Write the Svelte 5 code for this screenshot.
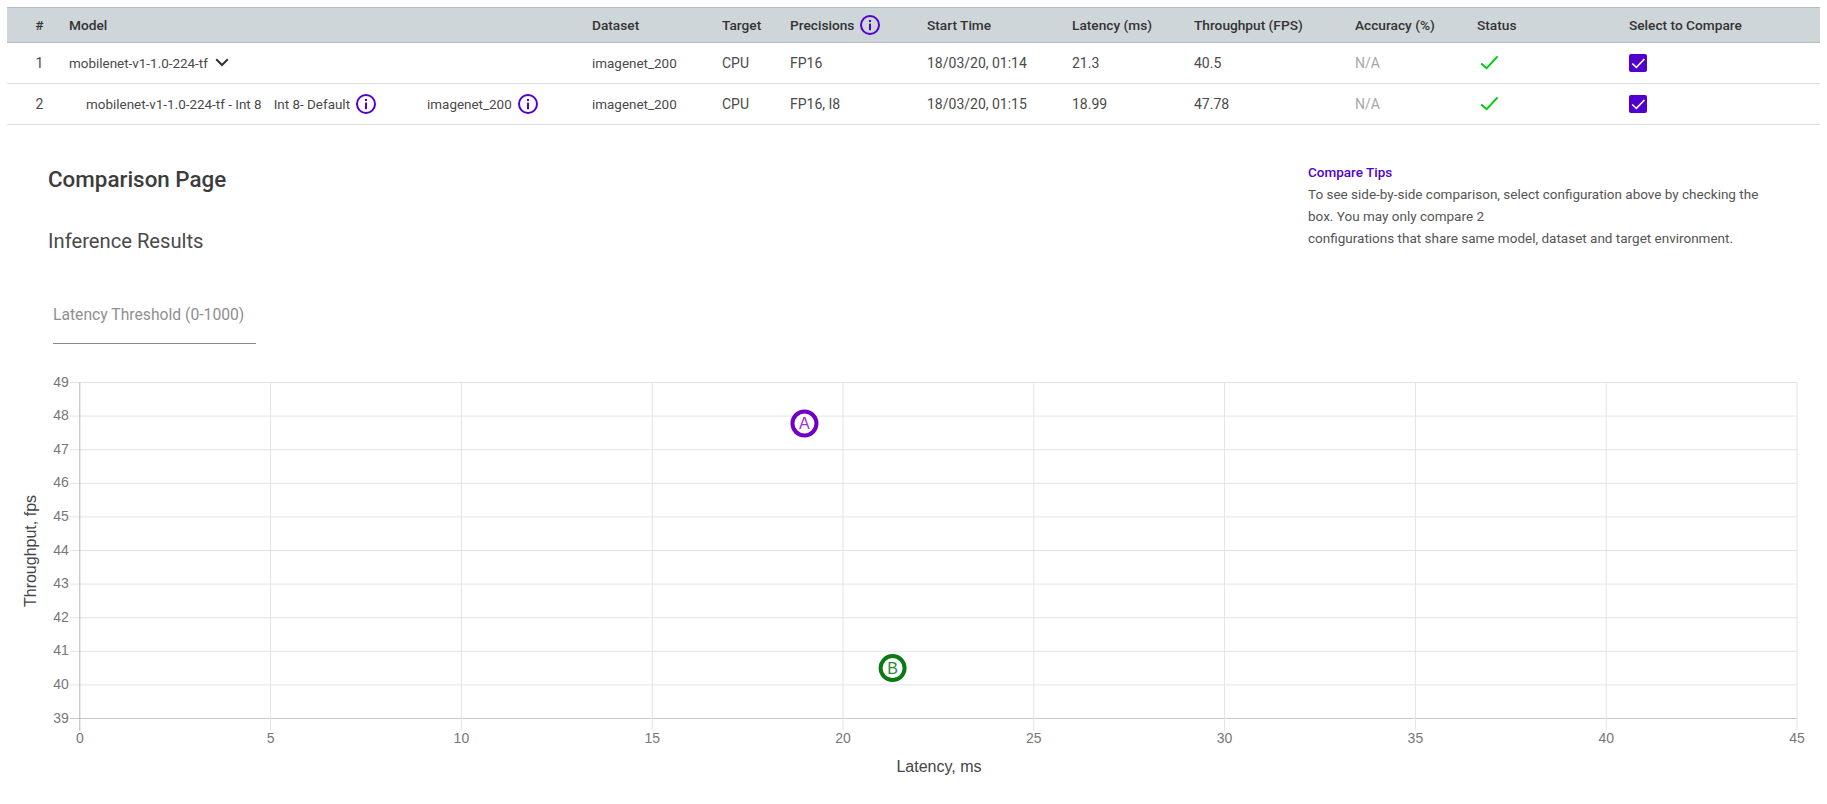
<script>
  const columns = [
    { label: '#', cls: 'num' },
    { label: 'Model' },
    { label: 'Dataset' },
    { label: 'Target' },
    { label: 'Precisions', info: true },
    { label: 'Start Time' },
    { label: 'Latency (ms)' },
    { label: 'Throughput (FPS)' },
    { label: 'Accuracy (%)' },
    { label: 'Status' },
    { label: 'Select to Compare' }
  ];

  const rows = [
    { id: 1, precisions: 'FP16', time: '18/03/20, 01:14', latency: '21.3', fps: '40.5' },
    { id: 2, precisions: 'FP16, I8', time: '18/03/20, 01:15', latency: '18.99', fps: '47.78', child: true }
  ];

  // chart scale, read off the reference
  const x0 = 79.8;
  const y0 = 718.5;
  const pxX = 38.16;
  const pxY = 33.6;
  const top = 344;
  const sx = (v) => x0 + v * pxX;
  const sy = (v) => y0 - v * pxY - top;

  const xTicks = [0, 5, 10, 15, 20, 25, 30, 35, 40, 45];
  const yTicks = [0, 1, 2, 3, 4, 5, 6, 7, 8, 9, 10];
</script>

{#snippet infoIcon()}
  <svg class="info" viewBox="0 0 20 20" width="20" height="20">
    <circle cx="10" cy="10" r="9" fill="none" stroke="#5200cf" stroke-width="2" />
    <rect x="9" y="5" width="2" height="2" fill="#5200cf" />
    <rect x="9" y="8.6" width="2" height="6.6" fill="#5200cf" />
  </svg>
{/snippet}

<div class="table">
  <div class="row head">
    {#each columns as col}
      <div class="cell {col.cls ?? ''}">
        {col.label}
        {#if col.info}{@render infoIcon()}{/if}
      </div>
    {/each}
  </div>
  {#each rows as row}
    <div class="row">
      <div class="cell num">{row.id}</div>
      {#if row.child}
        <div class="cell model child">
          <span class="name">mobilenet-v1-1.0-224-tf - Int 8</span>
          <span class="sub">Int 8- Default {@render infoIcon()}</span>
          <span class="sub set">imagenet_200 {@render infoIcon()}</span>
        </div>
      {:else}
        <div class="cell model">
          mobilenet-v1-1.0-224-tf
          <svg class="chev" viewBox="0 0 14 9" width="14" height="9">
            <path d="M1.2 1.2 L7 7 L12.8 1.2" fill="none" stroke="#333" stroke-width="2" />
          </svg>
        </div>
      {/if}
      <div class="cell model">imagenet_200</div>
      <div class="cell">CPU</div>
      <div class="cell">{row.precisions}</div>
      <div class="cell">{row.time}</div>
      <div class="cell">{row.latency}</div>
      <div class="cell">{row.fps}</div>
      <div class="cell na">N/A</div>
      <div class="cell">
        <svg class="ok" viewBox="0 0 20 16" width="20" height="16">
          <path d="M1.2 8.4 L6.6 13.2 L17.6 1.4" fill="none" stroke="#00cc11" stroke-width="2" />
        </svg>
      </div>
      <div class="cell">
        <span class="check">
          <svg viewBox="0 0 18 18" width="18" height="18">
            <path d="M3.2 9.5 L7.4 13.4 L15.4 5" fill="none" stroke="#fff" stroke-width="1.6" />
          </svg>
        </span>
      </div>
    </div>
  {/each}
</div>

<section class="summary">
  <div class="titles">
    <h1>Comparison Page</h1>
    <h2>Inference Results</h2>
  </div>
  <div class="tips">
    <h3>Compare Tips</h3>
    <p>To see side-by-side comparison, select configuration above by checking the box. You may only compare 2<br />configurations that share same model, dataset and target environment.</p>
  </div>
</section>

<div class="threshold">Latency Threshold (0-1000)</div>

<svg class="chart" width="1827" height="460" viewBox="0 0 1827 460">
  {#each yTicks as t}
    <line x1={x0 - 10} x2={sx(45)} y1={sy(t)} y2={sy(t)} stroke={t === 0 ? '#c9c9c9' : '#e4e4e4'} stroke-width="1" />
    <text class="tick" x={x0 - 11} y={sy(t) + 4} text-anchor="end">{39 + t}</text>
  {/each}
  {#each xTicks as t}
    <line x1={sx(t)} x2={sx(t)} y1={sy(10)} y2={sy(0) + 12} stroke={t === 0 ? '#b5b5b5' : '#e4e4e4'} stroke-width="1" />
    <text class="tick" x={sx(t)} y={sy(0) + 24} text-anchor="middle">{t}</text>
  {/each}
  <text class="axis" x="939" y={sy(0) + 53} text-anchor="middle">Latency, ms</text>
  <text class="axis" transform="translate(36 207) rotate(-90)" text-anchor="middle">Throughput, fps</text>

  <circle cx={sx(18.99)} cy={sy(8.78)} r="12" fill="#fff" stroke="#7000c8" stroke-width="4" />
  <text class="point" x={sx(18.99)} y={sy(8.78) + 5.5} fill="#9b30e0" text-anchor="middle">A</text>
  <circle cx={sx(21.3)} cy={sy(1.5)} r="12" fill="#fff" stroke="#0a7a12" stroke-width="4" />
  <text class="point" x={sx(21.3)} y={sy(1.5) + 5.5} fill="#2e8b36" text-anchor="middle">B</text>
</svg>

<style>
  :global(body) {
    font-family: Roboto, sans-serif;
    color: #3a3a3a;
    background: #fff;
  }

  .table {
    margin: 7px 7px 0;
    font-size: 14px;
  }

  .row {
    display: grid;
    grid-template-columns: 62px 523px 130px 68px 137px 145px 122px 161px 122px 152px 1fr;
    align-items: center;
    height: 40px;
    border-bottom: 1px solid #dcdfe0;
    color: #4a4a4a;
  }

  .row.head {
    height: 34px;
    background: #cfd6da;
    border-top: 1px solid #b5bcc0;
    border-bottom: 1px solid #b5bcc0;
    font-size: 13.7px;
    font-weight: 500;
    color: #333;
  }

  .cell {
    display: flex;
    align-items: center;
    white-space: nowrap;
  }

  .num {
    justify-content: center;
    padding-left: 3px;
  }

  .model {
    font-size: 13.45px;
  }

  .info {
    margin-left: 6px;
  }

  .chev {
    margin: 0 0 2px 7px;
  }

  .child {
    padding-left: 17px;
  }

  .sub {
    display: flex;
    align-items: center;
    margin-left: 12px;
  }

  .sub.set {
    margin-left: 51px;
  }

  .na {
    color: #a8a8a8;
  }

  .ok {
    margin-left: 3px;
  }

  .check {
    display: block;
    width: 18px;
    height: 18px;
    border-radius: 2px;
    background: #5200cf;
  }

  .summary {
    display: flex;
    justify-content: space-between;
    padding: 0 48px;
  }

  h1 {
    margin: 40px 0 0;
    font-size: 22.4px;
    font-weight: 500;
    line-height: 28px;
    color: #3c3c3c;
  }

  h2 {
    margin: 35px 0 0;
    font-size: 20.2px;
    font-weight: 400;
    line-height: 26px;
    color: #4a4a4a;
  }

  .tips {
    width: 471px;
    padding-top: 36px;
    font-size: 13.5px;
    line-height: 22px;
    color: #555;
  }

  h3 {
    margin: 0;
    font-size: 13.5px;
    font-weight: 500;
    line-height: 22px;
    color: #5200cf;
  }

  p {
    margin: 0;
  }

  .threshold {
    box-sizing: border-box;
    width: 203px;
    height: 90px;
    margin: 0 0 0 53px;
    padding-top: 51px;
    font-size: 15.7px;
    color: #8f8f8f;
    border-bottom: 1px solid #8a8a8a;
  }

  .chart {
    display: block;
  }

  .tick {
    font: 14px "Liberation Sans", sans-serif;
    fill: #777;
  }

  .axis {
    font: 16px "Liberation Sans", sans-serif;
    fill: #444;
  }

  .point {
    font: 16px "Liberation Sans", sans-serif;
  }
</style>
